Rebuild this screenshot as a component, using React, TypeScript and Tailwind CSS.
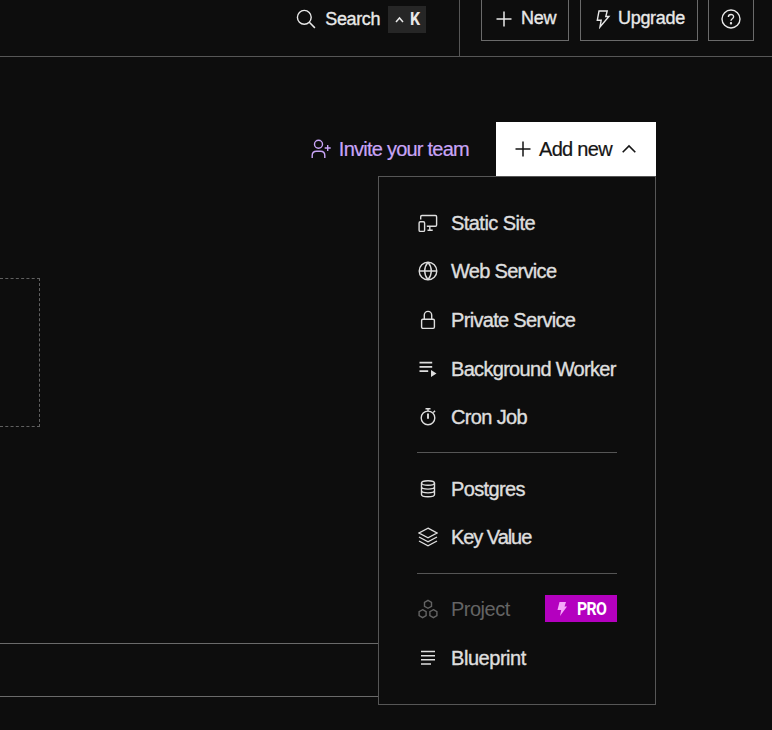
import React from "react";

type IconProps = { children: React.ReactNode; className?: string };

function Icon({ children, className = "" }: IconProps) {
  return (
    <svg viewBox="0 0 20 20" width="20" height="20" fill="none" stroke="currentColor" strokeWidth="1.4" className={"shrink-0 " + className}>
      {children}
    </svg>
  );
}

const Plus = () => <Icon><path d="M10 2.5v15M2.500 10h15" strokeWidth="1.500" /></Icon>;
const icons = {
  site: <Icon><path d="M2.700 6.500V3.700c0-.8.4-1.200 1.200-1.200h13.500c.8 0 1.200.4 1.200 1.200v8.300c0 .8-.4 1.200-1.200 1.200H8.800M11.800 13.200v4M9.500 17.300h5.200" /><rect x="1.100" y="8.800" width="5.500" height="9.600" rx="1.200" /></Icon>,
  globe: <Icon><circle cx="10" cy="10" r="8.800" /><path d="M1.200 10h17.600M10 1.200C5.600 6.500 5.600 13.500 10 18.800M10 1.200c4.400 5.300 4.400 12.300 0 17.600" /></Icon>,
  lock: <Icon><rect x="3.600" y="9.300" width="12.800" height="9.100" rx="1.300" /><path d="M6.300 9.300V5.100a3.700 3.700 0 0 1 7.400 0v4.200" /></Icon>,
  worker: <Icon><path d="M1.500 3.600h12.700M1.500 7.900h12.700M1.500 12.100h8.700" strokeWidth="1.600" /><path d="M13 11v7l5.500-3.500z" fill="currentColor" stroke="none" /></Icon>,
  timer: <Icon><circle cx="10" cy="10.900" r="6.800" /><path d="M7.500 1.700h5M10 1.700v2.500M15.200 5.500l1.900-1.600" /><path d="M10 6.500v5.300" strokeWidth="1.900" /></Icon>,
  database: <Icon><ellipse cx="10" cy="4" rx="6.500" ry="2.300" /><path d="M3.500 4v11.500c0 1.300 2.900 2.300 6.500 2.300s6.500-1 6.500-2.300V4M3.500 7.800c0 1.300 2.900 2.300 6.500 2.300s6.500-1 6.500-2.300M3.500 11.600c0 1.300 2.900 2.300 6.500 2.300s6.500-1 6.500-2.300" /></Icon>,
  layers: <Icon><path d="M10 1.200l9 4.800-9 4.800L1 6zM1 10l9 4.800 9-4.800M1 14l9 4.800 9-4.800" /></Icon>,
  project: <Icon><path d="M10 1.300l3.500 2v4L10 9.300l-3.500-2v-4zM4.600 10.700l3.500 2v4l-3.500 2-3.500-2v-4zM15.400 10.700l3.500 2v4l-3.500 2-3.500-2v-4z" /></Icon>,
  blueprint: <Icon><path d="M3 3.500h14M3 7.700h14M3 11.800h14M3 16h10" strokeWidth="1.600" /></Icon>,
};

type Entry = { label: string; icon: keyof typeof icons; tracking: string; pro?: boolean };

const groups: Entry[][] = [
  [
    { label: "Static Site", icon: "site", tracking: "tracking-[-0.55px]" },
    { label: "Web Service", icon: "globe", tracking: "tracking-[-0.7px]" },
    { label: "Private Service", icon: "lock", tracking: "tracking-[-0.68px]" },
    { label: "Background Worker", icon: "worker", tracking: "tracking-[-0.69px]" },
    { label: "Cron Job", icon: "timer", tracking: "tracking-[-0.65px]" },
  ],
  [
    { label: "Postgres", icon: "database", tracking: "tracking-[-0.65px]" },
    { label: "Key Value", icon: "layers", tracking: "tracking-[-1.05px]" },
  ],
  [
    { label: "Project", icon: "project", tracking: "tracking-[-0.5px]", pro: true },
    { label: "Blueprint", icon: "blueprint", tracking: "tracking-[-0.45px]" },
  ],
];

function MenuRow({ entry }: { entry: Entry }) {
  return (
    <li className={"flex h-[48.6px] items-center pl-[0.5px] " + (entry.pro ? "text-[#646464]" : "text-[#dedede]")}>
      {icons[entry.icon]}
      <span className={"ml-[13.5px] text-[20px] leading-6 whitespace-nowrap " + entry.tracking + (entry.pro ? "" : " [-webkit-text-stroke:0.4px]")}>{entry.label}</span>
      {entry.pro && (
        <span className="ml-auto flex h-[27px] w-[72px] items-center bg-[#b400bf] pl-[11px] text-white">
          <svg width="12" height="16" viewBox="0 0 12 16" fill="#f5a8fa"><path d="M3.500 1H10L8.500 5.500H11L4 15l1.200-6H1.500z" /></svg>
          <span className="ml-[9px] origin-left scale-x-[0.88] font-['Roboto',sans-serif] text-[18px] leading-6 font-bold tracking-[-0.8px]">PRO</span>
        </span>
      )}
    </li>
  );
}

export default function App() {
  return (
    <div className="h-[730px] w-[772px] overflow-hidden bg-[#0d0d0d] font-['Liberation_Sans',Arial,sans-serif] text-[#e8e8e8]">
      <header className="flex h-[57px] items-start justify-end border-b border-[#565656] pr-[18px]">
        <div className="flex h-[38px] items-center">
          <Icon><circle cx="8.300" cy="8.300" r="6.900" /><path d="M13.300 13.300l5.600 5.600" strokeWidth="1.500" /></Icon>
          <span className="ml-[9px] text-[18px] leading-6 tracking-[-0.4px] [-webkit-text-stroke:0.35px]">Search</span>
          <kbd className="ml-[8px] flex h-[27px] w-[38px] items-center bg-[#262626] pl-[7px]">
            <svg width="9" height="7" viewBox="0 0 9 7" fill="none" stroke="currentColor" strokeWidth="1.500"><path d="M1 6l3.500-4L8 6" /></svg>
            <span className="ml-[6px] origin-left scale-x-[0.88] font-['Roboto',sans-serif] text-[18px] leading-6 font-bold">K</span>
          </kbd>
        </div>
        <div className="ml-[33px] h-[56px] w-px bg-[#565656]" />
        <div className="ml-[21px] flex text-[18px] [-webkit-text-stroke:0.35px]">
          <button className="mr-[11px] flex h-[41px] w-[88px] items-center border border-t-0 border-[#6a6a6a] pb-[3px] pl-[12px]">
            <Plus /><span className="ml-[7px] tracking-[-0.3px]">New</span>
          </button>
          <button className="mr-[10px] flex h-[41px] w-[118px] items-center border border-t-0 border-[#6a6a6a] pb-[3px] pl-[12px]">
            <Icon><path d="M6 2h8.200l-1.400 5.500h3.100L7 18l1.200-6.800H4.300z" /></Icon><span className="ml-[5px] tracking-[-0.3px]">Upgrade</span>
          </button>
          <button className="flex h-[41px] w-[46px] items-center justify-center border border-t-0 border-[#6a6a6a] pb-[2px]">
            <Icon><circle cx="10" cy="10" r="9" /><path d="M7.400 8c0-3.300 5.200-3.300 5.200-.2 0 2-2.600 1.800-2.600 4" /><circle cx="10" cy="14.200" r=".5" fill="currentColor" /></Icon>
          </button>
        </div>
      </header>
      <main>
        <div className="flex h-[119px] items-end justify-end pr-[116px]">
          <a className="mr-[27px] flex h-[54px] items-center text-[#c9a5f7]">
            <Icon><circle cx="7.500" cy="5.200" r="4" /><path d="M1.200 19v-2.500c0-2.600 1.800-4.300 4.300-4.300h4c2.500 0 4.300 1.700 4.300 4.300V19M13.700 9h6M16.700 6v6" /></Icon>
            <span className="ml-[8px] text-[20px] leading-6 tracking-[-0.76px] whitespace-nowrap [-webkit-text-stroke:0.2px]">Invite your team</span>
          </a>
          <div className="relative">
            <button className="flex h-[54px] w-[160px] items-center bg-white pl-[17px] text-[#151515]">
              <Plus /><span className="ml-[6px] text-[20px] leading-6 tracking-[-0.7px] whitespace-nowrap [-webkit-text-stroke:0.2px]">Add new</span>
              <svg className="ml-[10px]" width="14" height="10" viewBox="0 0 14 10" fill="none" stroke="currentColor" strokeWidth="1.600"><path d="M.7 8.300L7 2l6.300 6.300" /></svg>
            </button>
            <div className="absolute top-full right-0 z-10 h-[529px] w-[278px] border border-[#565656] bg-[#0d0d0d] pt-[21.5px] pr-[38px] pl-[38px]">
              {groups.map((group, i) => (
                <ul key={i} className={i ? "mt-[11px] border-t border-[#555] pt-[11px]" : ""}>
                  {group.map((entry) => <MenuRow key={entry.label} entry={entry} />)}
                </ul>
              ))}
            </div>
          </div>
        </div>
        <div className="mt-[102px] h-[149px] w-10 border border-l-0 border-dashed border-[#606060]" />
        <div className="mt-[216px] h-[54px] w-[500px] border-y border-[#6a6a6a]" />
      </main>
    </div>
  );
}
